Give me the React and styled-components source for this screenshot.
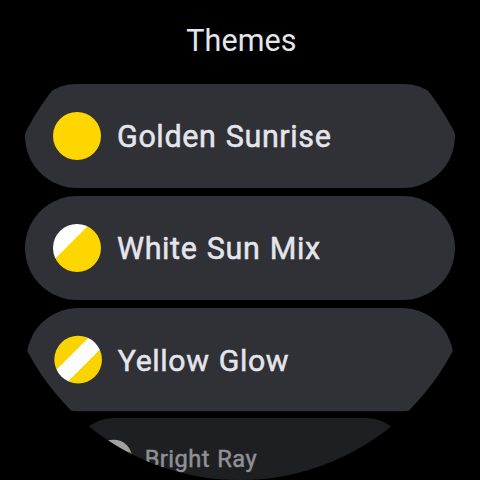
import React from 'react';
import styled, { createGlobalStyle } from 'styled-components';

const GlobalStyle = createGlobalStyle`
    * {
        box-sizing: border-box;
    }
    body {
        margin: 0;
        background: #000;
        overflow: hidden;
    }
`

const Watch = styled.main`
    display: flex;
    flex-direction: column;
    width: 480px;
    height: 480px;
    padding: 0 25px;
    overflow: hidden;
    border-radius: 50%;
    background: #000;
    font-family: Roboto, "Liberation Sans", sans-serif;
    color: #e5e5ec;
`

const Title = styled.h1`
    flex: none;
    height: 84px;
    margin: 0;
    padding: 22px 0 0 3px;
    font-size: 30.5px;
    font-weight: 400;
    line-height: 38px;
    letter-spacing: 0.1px;
    text-align: center;
`

const List = styled.div`
    display: flex;
    flex: none;
    flex-direction: column;
    gap: 8px;
`

const Chip = styled.button`
    display: flex;
    flex: none;
    align-items: center;
    gap: 16px;
    width: 100%;
    height: 104px;
    padding: 0 28px;
    border: none;
    border-radius: 52px;
    background: ${props => props.$color ? props.$color : "#303136"};
    color: inherit;
    font: inherit;
    text-align: left;
    transform: scale(${props => props.$scale ? props.$scale : 1});
    transform-origin: 50% 0;
    margin-top: ${props => props.$shift ? props.$shift : 0}px;
    opacity: ${props => props.$fade ? props.$fade : 1};
`

const Swatch = styled.span`
    flex: none;
    width: 48px;
    height: 48px;
    border-radius: 50%;
    background: ${props => props.$fill};
`

const Name = styled.span`
    padding-top: 1px;
    font-size: 30.5px;
    font-weight: 400;
    line-height: 36px;
    letter-spacing: 0.6px;
    word-spacing: 1.2px;
    white-space: nowrap;
    -webkit-text-stroke: 0.5px currentColor;
`

const THEMES = [
    {name: "Golden Sunrise", fill: "#ffd600"},
    {name: "White Sun Mix", fill: "linear-gradient(135deg, #fff 38%, #ffd600 38.8%)"},
    {
        name: "Yellow Glow",
        fill: "linear-gradient(135deg, #fad400 37.4%, #fcfcfc 38.2%, #fcfcfc 61.8%, #fad400 62.6%)",
        color: "#303037",
        scale: 0.993,
    },
    {
        name: "Bright Ray",
        fill: "linear-gradient(135deg, #fff 61.5%, #ffd600 62.5%)",
        scale: 0.775,
        shift: -2,
        fade: 0.63,
    },
]

const App = () => {

    return (
        <>
            <GlobalStyle />
            <Watch>
                <Title>Themes</Title>
                <List>
                    {THEMES.map(theme => (
                        <Chip
                            key={theme.name}
                            $color={theme.color}
                            $scale={theme.scale}
                            $shift={theme.shift}
                            $fade={theme.fade}
                        >
                            <Swatch $fill={theme.fill} />
                            <Name>{theme.name}</Name>
                        </Chip>
                    ))}
                </List>
            </Watch>
        </>
    );
}

export default App;
